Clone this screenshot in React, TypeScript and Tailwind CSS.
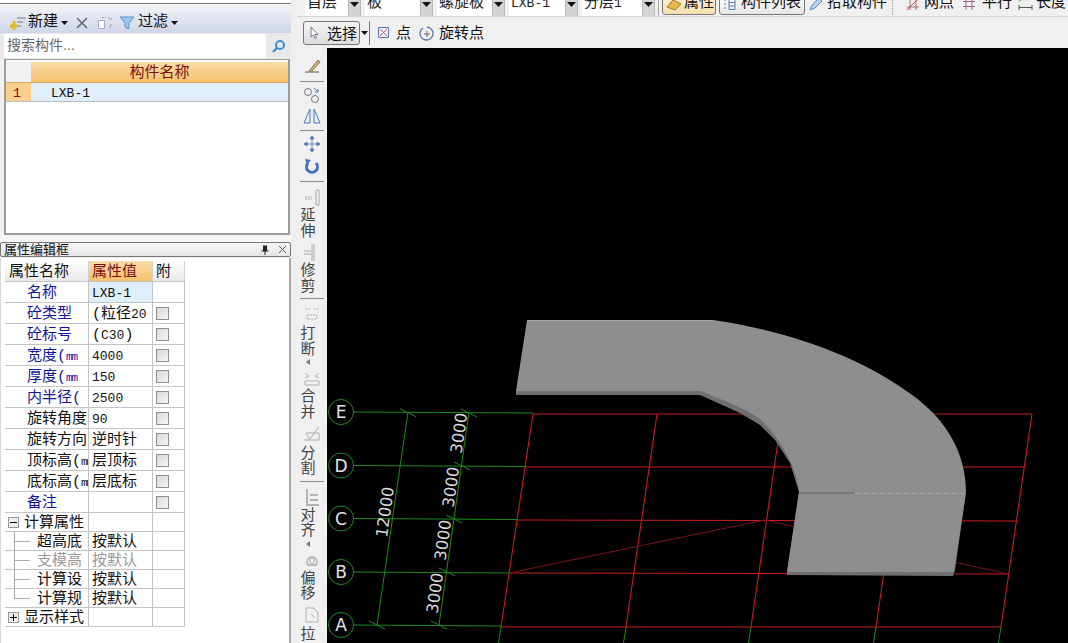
import React from "react";

const L = ({ children }: { children: React.ReactNode }) => <span className="text-[13px]">{children}</span>;
const M = () => <span className="text-[11px] tracking-[-1px]">mm</span>;

type Row = { name: React.ReactNode; val?: React.ReactNode; blue?: boolean; check?: boolean; active?: boolean };

const rows: Row[] = [
  { name: "名称", val: <L>LXB-1</L>, blue: true, active: true },
  { name: "砼类型", val: <>(粒径<L>20</L></>, blue: true, check: true },
  { name: "砼标号", val: <>(<L>C30</L>)</>, blue: true, check: true },
  { name: <>宽度(<M /></>, val: <L>4000</L>, blue: true, check: true },
  { name: <>厚度(<M /></>, val: <L>150</L>, blue: true, check: true },
  { name: "内半径(", val: <L>2500</L>, blue: true, check: true },
  { name: "旋转角度", val: <L>90</L>, check: true },
  { name: "旋转方向", val: "逆时针", check: true },
  { name: <>顶标高(<M /></>, val: "层顶标", check: true },
  { name: <>底标高(<M /></>, val: "层底标", check: true },
  { name: "备注", blue: true, check: true },
];

const subRows = [
  { name: "超高底", val: "按默认" },
  { name: "支模高", val: "按默认", gray: true },
  { name: "计算设", val: "按默认" },
  { name: "计算规", val: "按默认" },
];

const Caret = () => (
  <svg width="7" height="4" viewBox="0 0 7 4" className="shrink-0"><path d="M0 0h7L3.5 4z" fill="#111" /></svg>
);

const Combo = ({ text, w }: { text: React.ReactNode; w: string }) => (
  <div className="flex h-[26px] items-stretch">
    <div className={`${w} bg-white pl-[2px] pt-[1px] leading-[24px] text-[#222]`}>{text}</div>
    <div className="flex w-[13px] items-center justify-center border border-[#b8b8b8] bg-[#d4d4d4]">
      <svg width="9" height="5" viewBox="0 0 9 5"><path d="M0 0h9L4.5 5z" fill="#111" /></svg>
    </div>
  </div>
);

const Sep = () => <div className="mx-[3px] my-[3px] h-px bg-[#8a8a8a]" />;

const VText = ({ children }: { children: string }) => (
  <div className="mr-[8px] flex flex-col items-center text-[15px] leading-[15.5px] text-[#444]">
    {children.split("").map((c) => (
      <span key={c}>{c}</span>
    ))}
  </div>
);

const SmallArrow = () => (
  <div className="mr-[8px] flex h-[8px] items-center justify-center">
    <svg width="4" height="6" viewBox="0 0 4 6"><path d="M4 0v6L0 3z" fill="#777" /></svg>
  </div>
);

const VIcon = ({ h, children }: { h: string; children: React.ReactNode }) => (
  <div className={`flex ${h} items-center justify-center`}>
    <svg width="22" height="20" viewBox="0 0 22 20" fill="none">{children}</svg>
  </div>
);

const ticks = [
  [408, 412.7], [469, 413], [462, 466], [454, 519], [447, 572], [439, 625], [377, 625],
];

const grid = [
  { y1: 414, y2: 414, x1: 533, x2: 1032 },
  { y1: 467, y2: 467, x1: 525, x2: 1024 },
  { y1: 520, y2: 521, x1: 517, x2: 1016 },
  { y1: 573, y2: 574, x1: 509, x2: 1008 },
  { y1: 627, y2: 627, x1: 501, x2: 1001 },
];

const axes = [
  { t: "E", y: 412, x2: 533 },
  { t: "D", y: 465.5, x2: 525 },
  { t: "C", y: 518.5, x2: 517 },
  { t: "B", y: 572, x2: 509 },
  { t: "A", y: 625, x2: 501 },
];

const dims = [
  { t: "3000", x: 459, y: 433 },
  { t: "3000", x: 451, y: 487 },
  { t: "3000", x: 443, y: 540 },
  { t: "3000", x: 435, y: 593 },
  { t: "12000", x: 385, y: 512 },
];

const Drawing = () => (
  <svg className="block h-full w-full" viewBox="327 48 741 595" fill="none">
    {/* red grid */}
    {grid.map((g) => (
      <line key={g.y1} x1={g.x1} y1={g.y1} x2={g.x2} y2={g.y2} stroke="#c81e1e" strokeWidth="1.1" />
    ))}
    {[[533, 501], [657, 626], [782, 751], [907, 876], [1032, 1001]].map(([a, b]) => (
      <line key={a} x1={a} y1={414} x2={b} y2={627} stroke="#c81e1e" strokeWidth="1.1" />
    ))}
    {[501, 626, 751, 876, 1001].map((x) => (
      <line key={x} x1={x} y1={627} x2={x - 2.5} y2={643} stroke="#1f8a1f" />
    ))}
    <path d="M509 573L765 520L1008 574" stroke="#7a1414" />

    {/* green axes */}
    {axes.map((a) => (
      <g key={a.t}>
        <line x1={353} y1={a.y} x2={a.x2} y2={a.y + 1} stroke="#1f8a1f" />
        <circle cx={341} cy={a.y} r={12.5} stroke="#1f8a1f" />
        <text x={341} y={a.y + 6} textAnchor="middle" fontSize="17" fill="#e4e4e4" fontFamily="DejaVu Sans, sans-serif">{a.t}</text>
      </g>
    ))}
    <line x1={408} y1={412} x2={377} y2={625} stroke="#1f8a1f" />
    <line x1={469} y1={412} x2={439} y2={625} stroke="#1f8a1f" />
    {ticks.map(([x, y]) => (
      <line key={x} x1={x - 8} y1={y - 4} x2={x + 8} y2={y + 4} stroke="#1f8a1f" />
    ))}
    {dims.map((d) => (
      <text
        key={d.y}
        x={d.x}
        y={d.y}
        transform={`rotate(-82 ${d.x} ${d.y})`}
        textAnchor="middle"
        dominantBaseline="central"
        fontSize="16"
        fill="#dcdcdc"
        fontFamily="DejaVu Sans, sans-serif"
      >
        {d.t}
      </text>
    ))}

    {/* slab */}
    <path d="M516 390V395H700L740 413L760 425L775 440L790 463L799 492L787 572V575L953 576L955 570L966 492L700 390Z" fill="#6f6f6f" />
    <path
      d="M527 320H713C790 331 860 358 905 390C948 418 966 455 966 492L954 572H787L799 492C797 468 782 440 760 419C745 408 720 399 700 391H516Z"
      fill="#8e8e8e"
    />
    <path d="M527 320.5H713" stroke="#a8a8a8" />
    <path d="M799 493H855" stroke="#707070" strokeWidth="1.4" />
    <path d="M855 493.5H966" stroke="#a8a8a8" strokeDasharray="5 3" />
  </svg>
);

export default function App() {
  return (
    <div className="flex h-[643px] w-[1068px] overflow-hidden bg-[#f0f0f0] font-['Liberation_Mono','Noto_Sans_CJK_SC',monospace] text-[15px] text-[#111]">
      {/* left column */}
      <div className="flex w-[291px] shrink-0 flex-col">
        <div className="h-[4px] border-b border-[#777] bg-white" />
        <div className="h-[8px] bg-gradient-to-b from-[#f4f4f4] to-[#eceef4]" />
        <div className="flex h-[21px] items-center bg-gradient-to-b from-[#e8ebf3] to-[#cfd6e9] pl-[8px]">
          <svg width="19" height="18" viewBox="0 0 19 18" fill="none">
            <path d="M9 4h9M9 8h6M9 12h4" stroke="#778" />
            <path d="M6 7v9M2 12h8" stroke="#e3b92d" strokeWidth="3" />
          </svg>
          <span className="ml-[1px] leading-none">新建</span>
          <span className="ml-[3px]"><Caret /></span>
          <svg width="14" height="14" viewBox="0 0 14 14" className="ml-[7px]"><path d="M2 2l10 10M12 2L2 12" stroke="#6a6a6a" strokeWidth="1.6" /></svg>
          <svg width="17" height="14" viewBox="0 0 17 14" fill="none" className="ml-[8px]">
            <path d="M1.500 4.500h6v8h-6z" fill="#fff" stroke="#aab" />
            <path d="M5 1.500h4M11 2h3v3M14 8v3h-3" stroke="#99a" strokeDasharray="2 1" />
          </svg>
          <svg width="16" height="14" viewBox="0 0 16 14" className="ml-[5px]"><path d="M1 1h14L10 7v6L6 11V7z" fill="#9cc6ea" stroke="#5b93c8" /></svg>
          <span className="ml-[3px] leading-none">过滤</span>
          <span className="ml-[3px]"><Caret /></span>
        </div>
        <div className="flex h-[26px] items-center bg-[#e9e9e9] pl-[4px]">
          <div className="h-[24px] w-[262px] rounded-[2px] bg-white pl-[3px] text-[14px] leading-[22px] text-[#666]">
            搜索构件<span className="font-['Liberation_Sans',sans-serif]">...</span>
          </div>
          <div className="flex w-[25px] justify-center">
            <svg width="15" height="15" viewBox="0 0 15 15" fill="none">
              <circle cx="9" cy="6" r="4" stroke="#3f8fd0" strokeWidth="2" />
              <path d="M6 9l-4 4" stroke="#3f8fd0" strokeWidth="2.4" />
            </svg>
          </div>
        </div>
        <div className="ml-[4px] mr-[1px] h-[176px] border-x-2 border-t border-b-2 border-[#9c9c9c] bg-white pt-[2px]">
          <div className="flex h-[21px] border-b border-[#d8a85c]">
            <div className="w-[25px] bg-[#f1f1f1]" />
            <div className="flex-1 bg-gradient-to-b from-[#fbdca6] to-[#f5c26e] text-center leading-[24px] text-[#7b0c10]">构件名称</div>
          </div>
          <div className="flex h-[19px] border-b border-[#bcbcbc]">
            <div className="w-[25px] bg-[#f8cf8c] pl-[7px] text-[13px] leading-[22px] text-[#7b0c10]">1</div>
            <div className="flex-1 bg-[#deeefb] pl-[20px] text-[13px] leading-[22px]">LXB-1</div>
          </div>
        </div>
        <div className="h-[7px] bg-[#f7f7f7]" />
        <div className="flex h-[15px] items-center justify-between rounded-[2px] border border-[#777] bg-gradient-to-b from-[#f6f6f6] to-[#e6e6e6] pl-[3px] pr-[3px] text-[13px] leading-none">
          <span className="pt-[1px]">属性编辑框</span>
          <div className="flex items-center gap-[9px]">
            <svg width="8" height="10" viewBox="0 0 8 10"><path d="M2 0.500h4v5H7.500v1h-3V10h-1V6.500h-3v-1H2z" fill="#222" /></svg>
            <svg width="9" height="9" viewBox="0 0 9 9"><path d="M1 1l7 7M8 1L1 8" stroke="#555" /></svg>
          </div>
        </div>
        <div className="mt-px flex-1 border-l border-r-2 border-[#a8a8a8] border-l-[#d8d8d8] bg-white pl-[4px] pt-[3px]">
          <div className="w-[180px]">
            <div className="flex h-[21px] border-b border-[#c4c4c4] leading-[24px]">
              <div className="w-[84px] border-r border-[#d0d0d0] bg-gradient-to-b from-white to-[#e9e9e9] pl-[4px]">属性名称</div>
              <div className="w-[64px] border-r border-[#d0d0d0] bg-gradient-to-b from-[#fbdca6] to-[#f5c26e] pl-[3px] text-[#7b0c10]">属性值</div>
              <div className="flex-1 border-r border-[#d0d0d0] bg-gradient-to-b from-white to-[#e9e9e9] pl-[3px]">附</div>
            </div>
            {rows.map((r, i) => (
              <div key={i} className="flex h-[21px] border-b border-[#c4c4c4] leading-[24px]">
                <div className={`w-[84px] overflow-hidden whitespace-nowrap border-r border-[#c4c4c4] pl-[22px] ${r.blue ? "text-[#14149a]" : ""}`}>{r.name}</div>
                <div className={`w-[64px] overflow-hidden whitespace-nowrap border-r border-[#c4c4c4] pl-[3px] ${r.active ? "bg-[#deeefb]" : ""}`}>{r.val}</div>
                <div className="flex flex-1 items-center border-r border-[#c4c4c4] pl-[3px]">
                  {r.check && <div className="h-[13px] w-[13px] border border-[#8f8f8f] bg-gradient-to-br from-[#d8d8d8] to-[#f6f6f6]" />}
                </div>
              </div>
            ))}
            <div className="flex h-[19px] border-b border-[#c4c4c4] leading-[18px]">
              <div className="flex w-[84px] items-center border-r border-[#c4c4c4] pl-[3px]">
                <div className="flex h-[11px] w-[11px] items-center justify-center border border-[#999] bg-[#eee]">
                  <div className="h-px w-[7px] bg-black" />
                </div>
                <span className="ml-[5px] pt-[4px]">计算属性</span>
              </div>
              <div className="w-[64px] border-r border-[#c4c4c4]" />
              <div className="flex-1 border-r border-[#c4c4c4]" />
            </div>
            {subRows.map((r, i) => (
              <div key={r.name} className={`flex h-[19px] border-b border-[#c4c4c4] leading-[22px] ${r.gray ? "text-[#999]" : ""}`}>
                <div className="relative w-[84px] overflow-hidden whitespace-nowrap border-r border-[#c4c4c4] pl-[32px]">
                  <div className={`absolute left-[9px] top-0 w-px bg-[#aaa] ${i === 3 ? "h-[9px]" : "h-[19px]"}`} />
                  <div className="absolute left-[9px] top-[9px] h-px w-[16px] bg-[#aaa]" />
                  {r.name}
                </div>
                <div className="w-[64px] border-r border-[#c4c4c4] pl-[3px]">{r.val}</div>
                <div className="flex-1 border-r border-[#c4c4c4]" />
              </div>
            ))}
            <div className="flex h-[19px] border-b border-[#c4c4c4] leading-[18px]">
              <div className="flex w-[84px] items-center border-r border-[#c4c4c4] pl-[3px]">
                <div className="relative flex h-[11px] w-[11px] items-center justify-center border border-[#999] bg-[#eee]">
                  <div className="h-px w-[7px] bg-black" />
                  <div className="absolute h-[7px] w-px bg-black" />
                </div>
                <span className="ml-[5px] pt-[4px]">显示样式</span>
              </div>
              <div className="w-[64px] border-r border-[#c4c4c4]" />
              <div className="flex-1 border-r border-[#c4c4c4]" />
            </div>
          </div>
        </div>
      </div>

      {/* splitter */}
      <div className="w-[6px] shrink-0 bg-[#efefef]" />

      {/* right column */}
      <div className="flex min-w-0 flex-1 flex-col">
        <div className="h-[17px] overflow-hidden border-b border-[#d4d4d4]">
          <div className="-mt-[9px] flex h-[26px] items-center whitespace-nowrap pl-[8px]">
            <div className="flex gap-[4px]">
              <Combo text="首层" w="w-[43px]" />
              <Combo text="板" w="w-[55px]" />
              <Combo text="螺旋板" w="w-[55px]" />
              <Combo text={<L>LXB-1</L>} w="w-[56px]" />
              <Combo text={<>分层<L>1</L></>} w="w-[60px]" />
            </div>
            <div className="ml-[3px] h-[26px] w-px bg-[#aaa]" />
            <div className="ml-[3px] flex h-[22px] w-[54px] items-center rounded-[3px] border border-[#777] bg-gradient-to-b from-[#fff4dc] to-[#f6dfae] pl-[3px]">
              <svg width="16" height="13" viewBox="0 0 16 13"><path d="M1 9l6-7 8 4-6 6z" fill="#e9b84c" stroke="#a07a20" /></svg>
              <span className="ml-[2px]">属性</span>
            </div>
            <div className="ml-[3px] flex h-[22px] w-[86px] items-center rounded-[3px] border border-[#777] bg-gradient-to-b from-white to-[#e6e6e6] pl-[3px]">
              <svg width="14" height="13" viewBox="0 0 14 13" fill="none"><path d="M1 2h2M1 6h2M1 10h2M6 1.500h6v10H6zM6 4.500h6M6 8h6" stroke="#5a7fb0" /></svg>
              <span className="ml-[4px]">构件列表</span>
            </div>
            <svg width="14" height="14" viewBox="0 0 14 14" className="ml-[4px] shrink-0"><path d="M1 13l2-5 7-7 3 3-7 7z" fill="#b7d4ee" stroke="#5a8fc4" /></svg>
            <span className="ml-[4px]">拾取构件</span>
            <div className="ml-[5px] h-[26px] w-px border-l border-dotted border-[#999]" />
            <svg width="14" height="14" viewBox="0 0 14 14" fill="none" className="ml-[13px] shrink-0"><path d="M4 1v12M10 1v12M1 10h12" stroke="#b07070" /><path d="M1 13L13 1" stroke="#d05050" /></svg>
            <span className="ml-[4px]">网点</span>
            <svg width="14" height="14" viewBox="0 0 14 14" fill="none" className="ml-[8px] shrink-0"><path d="M4 1v12M10 1v12M1 4.500h12M1 9.500h12" stroke="#9a6a8a" /></svg>
            <span className="ml-[6px]">平行</span>
            <svg width="15" height="14" viewBox="0 0 15 14" fill="none" className="ml-[6px] shrink-0"><path d="M1 8v5M14 8v5M1 10.500h13" stroke="#555" /><circle cx="2" cy="3" r="1.500" fill="#8fc08f" /></svg>
            <span className="ml-[3px]">长度</span>
          </div>
        </div>
        <div className="flex h-[31px] items-center pl-[6px]">
          <div className="flex h-[24px] w-[57px] items-center rounded-[3px] border border-[#777] bg-gradient-to-b from-[#f4f4f4] to-[#dedede] pl-[6px]">
            <svg width="9" height="13" viewBox="0 0 9 13"><path d="M1 1v10l2.500-2 1.500 3.500 1.500-.7L5 8.500h3z" fill="#fff" stroke="#778" /></svg>
            <span className="ml-[8px] pt-[5px] leading-none">选择</span>
          </div>
          <span className="ml-[1px]"><Caret /></span>
          <div className="ml-[1px] h-[24px] w-px bg-[#777]" />
          <svg width="11" height="11" viewBox="0 0 11 11" fill="none" className="ml-[8px]"><path d="M.5.500h10v10H.5z" stroke="#5a78b8" /><path d="M2 2l7 7M9 2L2 9" stroke="#c05a7a" /></svg>
          <span className="ml-[7px] pt-[4px] leading-none">点</span>
          <svg width="16" height="16" viewBox="0 0 16 16" fill="none" className="ml-[8px]">
            <path d="M4 3A6.500 6.500 0 1 0 8 2" stroke="#5a78a8" strokeWidth="1.300" />
            <path d="M8 6v6M5 9h6" stroke="#667" />
          </svg>
          <span className="ml-[4px] pt-[4px] leading-none">旋转点</span>
        </div>
        <div className="flex min-h-0 flex-1">
          <div className="flex w-[30px] shrink-0 flex-col overflow-hidden">
            <div className="h-[6px]" />
            <VIcon h="h-[24px]">
              <path d="M4 16h14" stroke="#555" /><path d="M8 15l9-11 2 2-8 9z" fill="#cbb27a" stroke="#8a7a50" />
            </VIcon>
            <Sep />
            <VIcon h="h-[20px]">
              <circle cx="7" cy="7" r="3.500" stroke="#778" /><circle cx="14" cy="14" r="3.500" stroke="#778" /><path d="M13 3l4 4M17 4v3h-3" stroke="#5a78a8" />
            </VIcon>
            <VIcon h="h-[22px]">
              <path d="M9 3L3 17h6zM13 3l6 14h-6z" stroke="#4a78c0" />
            </VIcon>
            <Sep />
            <VIcon h="h-[20px]">
              <path d="M11 3v14M4 10h14M11 2l-2 3h4zM11 18l-2-3h4zM3 10l3-2v4zM19 10l-3-2v4z" stroke="#4a78a8" fill="#4a78a8" strokeWidth="0.800" />
            </VIcon>
            <VIcon h="h-[24px]">
              <path d="M15 7a5.500 5.500 0 1 1-8 0" stroke="#3f72c4" strokeWidth="3" /><path d="M4 3l6 1-4 5z" fill="#3f72c4" />
            </VIcon>
            <Sep />
            <VIcon h="h-[25px]">
              <path d="M4 10h7M4 12h7" stroke="#aaa" strokeDasharray="2 1" /><path d="M15 3h3v15h-3z" stroke="#aaa" />
            </VIcon>
            <VText>延伸</VText>
            <VIcon h="h-[24px]">
              <path d="M11 2v17M13 2v17M3 9h7M3 12h7" stroke="#aaa" />
            </VIcon>
            <VText>修剪</VText>
            <Sep />
            <VIcon h="h-[25px]">
              <path d="M4 4h5M13 4h5M6 10h10v4H6z" stroke="#b0b0b0" strokeDasharray="2 1" />
            </VIcon>
            <VText>打断</VText>
            <SmallArrow />
            <VIcon h="h-[24px]">
              <path d="M4 5l4 3-4 2M18 5l-4 3 4 2M4 13h14v4H4z" stroke="#b0b0b0" />
            </VIcon>
            <VText>合并</VText>
            <VIcon h="h-[26px]">
              <path d="M3 16h15M5 9h13v7M5 9l4 7M18 3L9 15" stroke="#aaa" />
            </VIcon>
            <VText>分割</VText>
            <Sep />
            <VIcon h="h-[24px]">
              <path d="M6 2v16h12M9 8h8M9 13h8" stroke="#a0a0a0" strokeWidth="1.500" />
            </VIcon>
            <VText>对齐</VText>
            <SmallArrow />
            <VIcon h="h-[24px]">
              <path d="M7 15a5 5 0 1 1 8 0z" stroke="#aaa" strokeWidth="1.500" /><circle cx="11" cy="11" r="2.500" stroke="#aaa" />
            </VIcon>
            <VText>偏移</VText>
            <VIcon h="h-[25px]">
              <path d="M5 3h8l4 5v9H5z" stroke="#b0b0b0" /><path d="M10 9l4 4" stroke="#b0b0b0" />
            </VIcon>
            <VText>拉</VText>
          </div>
          <div className="min-w-0 flex-1 bg-black">
            <Drawing />
          </div>
        </div>
      </div>
    </div>
  );
}
